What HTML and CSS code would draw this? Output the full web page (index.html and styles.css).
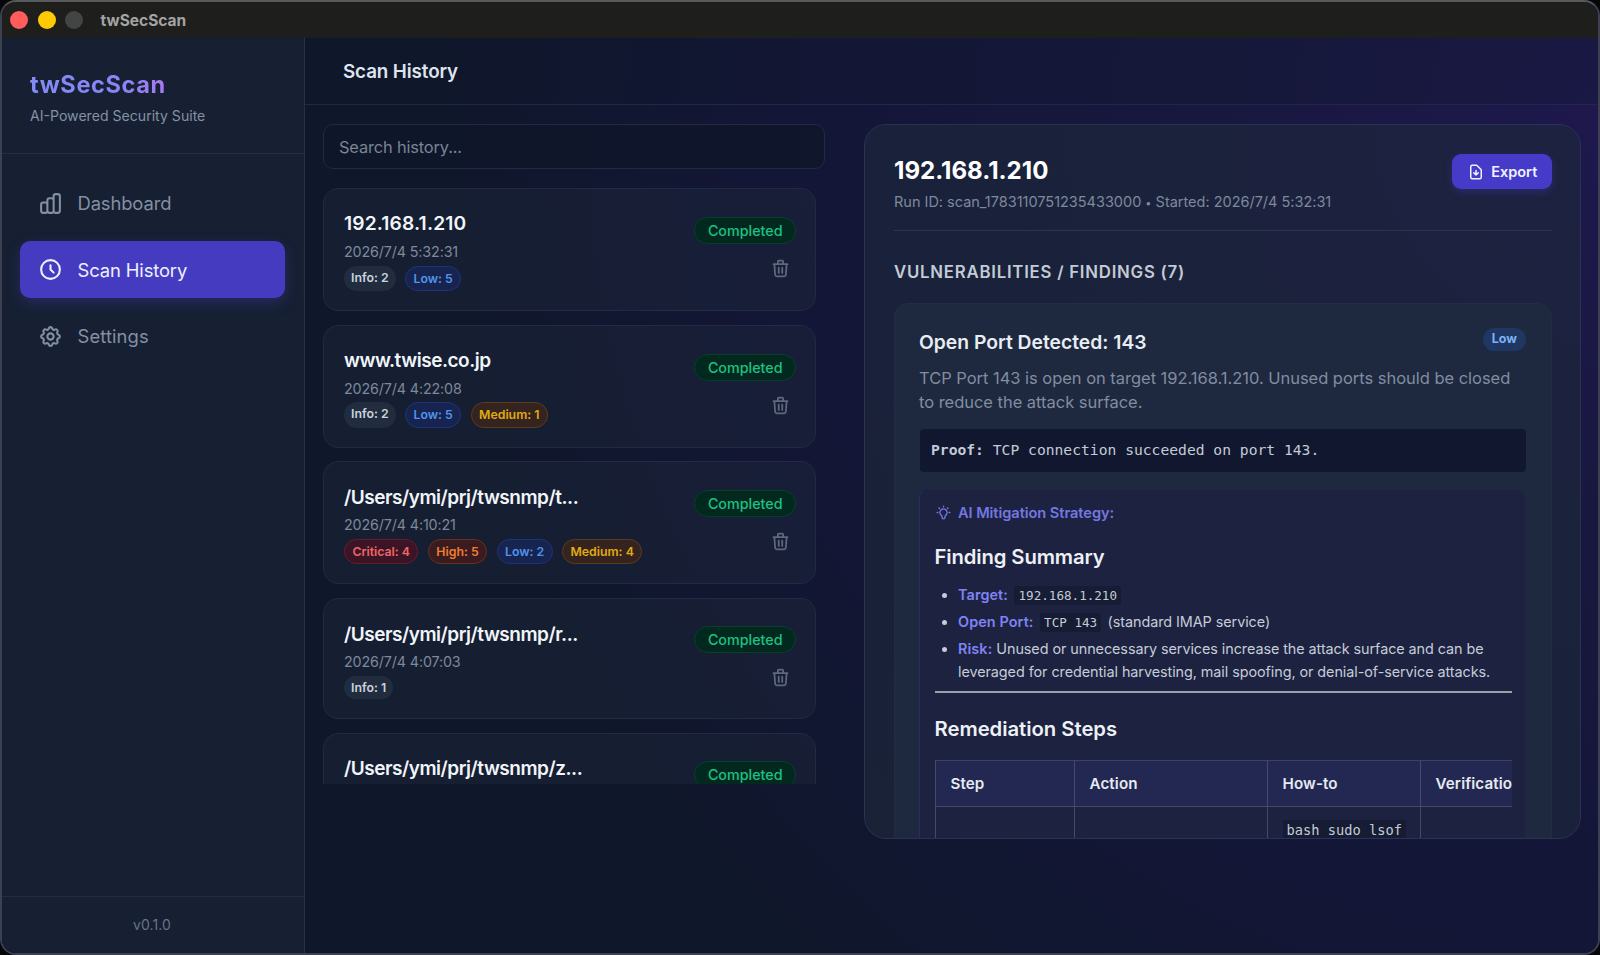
FILE: index.html
```html
<!DOCTYPE html>
<html lang="en">
<head>
<meta charset="utf-8">
<title>twSecScan</title>
<link rel="stylesheet" href="styles.css">
</head>
<body>
<svg class="defs" width="0" height="0">
  <symbol id="trash" viewBox="0 0 24 24"><path d="M19 7l-.867 12.142A2 2 0 0116.138 21H7.862a2 2 0 01-1.995-1.858L5 7m5 4v6m4-6v6m1-10V4a1 1 0 00-1-1h-4a1 1 0 00-1 1v3M4 7h16"/></symbol>
</svg>
<div class="window">
  <div class="titlebar">
    <span class="dot red"></span><span class="dot yellow"></span><span class="dot gray"></span>
    <span class="window-title">twSecScan</span>
  </div>
  <div class="app">
    <aside class="sidebar">
      <div class="brand">
        <div><span class="brand-name">twSecScan</span></div>
        <div class="brand-sub">AI-Powered Security Suite</div>
      </div>
      <nav class="nav">
        <a class="nav-item"><svg class="nav-icon" viewBox="0 0 24 24"><path d="M9 19v-6a2 2 0 00-2-2H5a2 2 0 00-2 2v6a2 2 0 002 2h2a2 2 0 002-2zm0 0V9a2 2 0 012-2h2a2 2 0 012 2v10m-6 0a2 2 0 002 2h2a2 2 0 002-2m0 0V5a2 2 0 012-2h2a2 2 0 012 2v14a2 2 0 01-2 2h-2a2 2 0 01-2-2z"/></svg><span>Dashboard</span></a>
        <a class="nav-item active"><svg class="nav-icon" viewBox="0 0 24 24"><path d="M12 8v4l3 3m6-3a9 9 0 11-18 0 9 9 0 0118 0z"/></svg><span>Scan History</span></a>
        <a class="nav-item"><svg class="nav-icon" viewBox="0 0 24 24"><path d="M10.325 4.317c.426-1.756 2.924-1.756 3.35 0a1.724 1.724 0 002.573 1.066c1.543-.94 3.31.826 2.37 2.37a1.724 1.724 0 001.065 2.572c1.756.426 1.756 2.924 0 3.35a1.724 1.724 0 00-1.066 2.573c.94 1.543-.826 3.31-2.37 2.37a1.724 1.724 0 00-2.572 1.065c-.426 1.756-2.924 1.756-3.35 0a1.724 1.724 0 00-2.573-1.066c-1.543.94-3.31-.826-2.37-2.37a1.724 1.724 0 00-1.065-2.572c-1.756-.426-1.756-2.924 0-3.35a1.724 1.724 0 001.066-2.573c-.94-1.543.826-3.31 2.37-2.37.996.608 2.296.07 2.572-1.065z"/><path d="M15 12a3 3 0 11-6 0 3 3 0 016 0z"/></svg><span class="settings">Settings</span></a>
      </nav>
      <div class="version">v0.1.0</div>
    </aside>
    <main class="main">
      <header class="header">Scan History</header>
      <div class="content">
        <section class="history">
          <div class="search">Search history...</div>
          <div class="cards">
            <article class="card">
              <div class="card-info">
                <div class="card-title ip">192.168.1.210</div>
                <div class="card-date">2026/7/4 5:32:31</div>
                <div class="tags"><span class="tag info">Info: 2</span><span class="tag low">Low: 5</span></div>
              </div>
              <div class="card-side"><span class="status">Completed</span><span class="delete"><svg><use href="#trash"/></svg></span></div>
            </article>
            <article class="card">
              <div class="card-info">
                <div class="card-title">www.twise.co.jp</div>
                <div class="card-date">2026/7/4 4:22:08</div>
                <div class="tags"><span class="tag info">Info: 2</span><span class="tag low">Low: 5</span><span class="tag medium">Medium: 1</span></div>
              </div>
              <div class="card-side"><span class="status">Completed</span><span class="delete"><svg><use href="#trash"/></svg></span></div>
            </article>
            <article class="card">
              <div class="card-info">
                <div class="card-title">/Users/ymi/prj/twsnmp/t...</div>
                <div class="card-date">2026/7/4 4:10:21</div>
                <div class="tags"><span class="tag critical">Critical: 4</span><span class="tag high">High: 5</span><span class="tag low">Low: 2</span><span class="tag medium">Medium: 4</span></div>
              </div>
              <div class="card-side"><span class="status">Completed</span><span class="delete"><svg><use href="#trash"/></svg></span></div>
            </article>
            <article class="card">
              <div class="card-info">
                <div class="card-title">/Users/ymi/prj/twsnmp/r...</div>
                <div class="card-date">2026/7/4 4:07:03</div>
                <div class="tags"><span class="tag info">Info: 1</span></div>
              </div>
              <div class="card-side"><span class="status">Completed</span><span class="delete"><svg><use href="#trash"/></svg></span></div>
            </article>
            <article class="card last">
              <div class="card-info">
                <div class="card-title">/Users/ymi/prj/twsnmp/z...</div>
              </div>
              <div class="card-side"><span class="status">Completed</span></div>
            </article>
          </div>
        </section>
        <section class="detail">
          <div class="detail-head">
            <div>
              <div class="detail-title">192.168.1.210</div>
              <div class="detail-meta">Run ID: scan_1783110751235433000 <span class="bullet">•</span> Started: 2026/7/4 5:32:31</div>
            </div>
            <button class="export"><svg viewBox="0 0 24 24"><path d="M12 10v6m0 0l-3-3m3 3l3-3m2 8H7a2 2 0 01-2-2V5a2 2 0 012-2h5.586a1 1 0 01.707.293l5.414 5.414a1 1 0 01.293.707V19a2 2 0 01-2 2z"/></svg><span>Export</span></button>
          </div>
          <h3 class="section-title">VULNERABILITIES / FINDINGS (7)</h3>
          <div class="finding">
            <div class="finding-head"><span class="finding-title">Open Port Detected: 143</span><span class="severity">Low</span></div>
            <p class="finding-text">TCP Port 143 is open on target 192.168.1.210. Unused ports should be closed<br>to reduce the attack surface.</p>
            <div class="proof"><b>Proof:</b> TCP connection succeeded on port 143.</div>
            <div class="ai">
              <div class="ai-label"><svg viewBox="0 0 24 24"><path d="M12 3v1m6.364 1.636l-.707.707M21 12h-1M4 12H3m3.343-5.657l-.707-.707m2.828 9.9a5 5 0 117.072 0l-.548.547A3.374 3.374 0 0014 18.469V19a2 2 0 11-4 0v-.531c0-.895-.356-1.754-.988-2.386l-.548-.547z"/></svg><span>AI Mitigation Strategy:</span></div>
              <h4 class="ai-title">Finding Summary</h4>
              <ul class="ai-list">
                <li><b>Target:</b> <code>192.168.1.210</code></li>
                <li><b>Open Port:</b> <code>TCP 143</code> (standard IMAP service)</li>
                <li><b>Risk:</b> Unused or unnecessary services increase the attack surface and can be<br>leveraged for credential harvesting, mail spoofing, or denial-of-service attacks.</li>
              </ul>
              <hr class="rule">
              <h4 class="ai-title steps">Remediation Steps</h4>
              <div class="table">
                <div class="cell head">Step</div><div class="cell head">Action</div><div class="cell head">How-to</div><div class="cell head">Verification</div>
                <div class="cell"></div><div class="cell"></div><div class="cell"><code>bash sudo lsof</code></div><div class="cell"></div>
              </div>
            </div>
          </div>
        </section>
      </div>
    </main>
  </div>
</div>
</body>
</html>
```
FILE: styles.css
```css
* { box-sizing: border-box; }
body { margin: 0; background: #060708; font-family: Inter, "Liberation Sans", sans-serif; height: 955px; overflow: hidden; }
svg { fill: none; stroke: currentColor; stroke-width: 2; stroke-linecap: round; stroke-linejoin: round; flex: none; }
.defs { position: absolute; }
.window { height: 955px; border: 2px solid #3c4050; border-top-color: #58595b; border-radius: 16px; overflow: hidden; display: flex; flex-direction: column; background: #0f172a; }
.titlebar { height: 36px; flex: none; background: #1e1e1d; display: flex; align-items: center; padding-left: 8px; gap: 9.5px; }
.dot { width: 18px; height: 18px; border-radius: 50%; }
.red { background: #ff5d5b; }
.yellow { background: #fecb02; }
.gray { background: #434544; }
.window-title { margin-left: 8px; font-size: 15.5px; font-weight: 700; color: #a3a3a3; }
.app { flex: 1; display: flex; min-height: 0; background: radial-gradient(circle at 1598px 80px, #1e184d 0, #18183e 400px, #141638 760px, #0f172a 1180px); }
.sidebar { width: 303px; flex: none; background: #162032; border-right: 1px solid #263145; display: flex; flex-direction: column; }
.brand { height: 116px; padding: 32px 28px 0; border-bottom: 1px solid #222d3f; }
.brand-name { font-size: 23.6px; line-height: 30px; font-weight: 700; letter-spacing: .6px; background: linear-gradient(90deg, #818cf8, #8b83f7 70%, #a67bf0); -webkit-background-clip: text; background-clip: text; color: transparent; }
.brand-sub { font-size: 14.1px; line-height: 20px; margin-top: 6px; color: #8491a5; }
.nav { flex: 1; padding: 20px 19px 20px 18px; display: flex; flex-direction: column; gap: 9px; }
.nav-item { height: 57.6px; border-radius: 10px; display: flex; align-items: center; padding: 1px 0 0 18px; gap: 14.5px; font-size: 18.4px; letter-spacing: -.12px; color: #8390a4; }
.settings { letter-spacing: .1px; }
.nav-icon { width: 25px; height: 25px; }
.active { background: #453bc1; color: #eef0ff; box-shadow: 0 5px 14px rgba(79, 70, 229, .26); }
.version { height: 57px; border-top: 1px solid #222d3f; text-align: center; font-size: 14px; letter-spacing: .1px; line-height: 56px; padding-right: 2px; color: #64748b; }
.main { flex: 1; min-width: 0; display: flex; flex-direction: column; }
.header { height: 67px; flex: none; border-bottom: 1px solid #20284a; padding-left: 38px; line-height: 68px; font-size: 18.8px; letter-spacing: -.1px; font-weight: 600; color: #dfe5ee; background: rgba(15, 23, 42, .25); }
.content { flex: 1; display: flex; padding: 19px 17px 0 18px; }
.history { width: 502px; flex: none; }
.search { height: 45px; border: 1px solid #222b42; border-radius: 10px; background: rgba(15, 23, 42, .75); padding-left: 15px; line-height: 44px; font-size: 16.4px; letter-spacing: -.15px; color: #7b8596; }
.cards { margin-top: 19px; height: 596px; overflow: hidden; display: flex; flex-direction: column; gap: 13.6px; padding-right: 9px; }
.card { flex: none; border: 1px solid #212a42; border-radius: 15px; background: rgba(30, 41, 59, .45); padding: 20px 19px 19px 20px; display: flex; justify-content: space-between; align-items: center; }
.card-title { font-size: 19px; line-height: 28px; padding-top: 1.5px; font-weight: 600; letter-spacing: -.47px; color: #f1f5f9; }
.ip { padding: 0 0 1.5px; font-size: 19.2px; letter-spacing: .15px; }
.card-date { font-size: 14.3px; letter-spacing: -.13px; line-height: 22px; margin: 2.5px 0; color: #7d899b; }
.tags { display: flex; gap: 9.5px; }
.tag { border-radius: 13px; font-size: 12.3px; line-height: 23.6px; font-weight: 600; padding: 0 7.4px; border: 1px solid; }
.info { border: 0; padding: 0 7px; background: #212c3e; color: #cbd3df; }
.low { color: #4f94ea; background: #182450; border-color: #1e347a; }
.medium { color: #e0ac10; background: #35231f; border-color: #5c3d16; }
.critical { color: #ef6668; background: #3b1526; border-color: #6a1a2a; }
.high { color: #f07d30; background: #3a1c20; border-color: #6b2f1a; }
.card-side { display: flex; flex-direction: column; align-items: flex-end; gap: 11px; }
.status { height: 27px; line-height: 25px; padding: 0 12.5px; border-radius: 14px; font-size: 14.3px; font-weight: 500; color: #1cc284; background: #03291f; border: 1px solid #06402d; }
.delete { padding: 3px 5px; height: 28px; color: #5d697c; }
.delete svg { width: 21px; height: 21px; display: block; }
.last { height: 123px; align-items: flex-start; }
.last .card-side { padding-top: 7px; }
.detail { margin-left: 39px; flex: 1; min-width: 0; height: 715px; border: 1px solid #2b3252; border-radius: 22px; overflow: hidden; background: rgba(29, 41, 60, .64); padding: 29px 28px 0 29px; }
.detail-head { display: flex; justify-content: space-between; align-items: flex-start; height: 77px; border-bottom: 1px solid #2c3550; }
.detail-title { font-size: 24.1px; line-height: 34px; font-weight: 700; color: #fff; }
.detail-meta { font-size: 14.5px; letter-spacing: -.01px; line-height: 20px; margin-top: 4px; color: #7d899d; }
.bullet { font-size: 11px; }
.export { height: 35px; width: 100px; padding: 0; border: 0; border-radius: 9px; background: #453bc8; color: #f2f2ff; font: 600 14.5px Inter, sans-serif; display: flex; align-items: center; justify-content: center; gap: 6.5px; box-shadow: 0 3px 8px rgba(79, 70, 229, .25); }
.export svg { width: 18px; height: 18px; }
.section-title { margin: 29px 0 18px; font-size: 16.8px; line-height: 25px; font-weight: 600; letter-spacing: .76px; color: #c3cbd7; }
.finding { border: 1px solid #222d43; border-radius: 14px; background: #1e283e; padding: 24px 25px 0 24px; height: 700px; }
.finding-head { display: flex; justify-content: space-between; }
.finding-title { font-size: 19.3px; line-height: 29px; font-weight: 600; color: #e8edf4; }
.severity { height: 23px; line-height: 22px; border-radius: 12px; padding: 0 9px; background: #213763; color: #7db2f5; font-size: 12.5px; font-weight: 700; }
.finding-text { margin: 9px 0 15px; font-size: 16.5px; letter-spacing: -.03px; line-height: 24px; color: #818da0; white-space: nowrap; }
.proof { margin-left: 1px; height: 43px; border-radius: 4px; background: #11172e; padding-left: 11px; line-height: 42px; font-family: "DejaVu Sans Mono", monospace; font-size: 14.67px; color: #c3cbd8; }
.ai { margin-top: 17px; height: 500px; border: 1px solid #1f2748; border-left: 1px solid #262f62; border-radius: 8px 8px 0 0; background: #1c2240; padding: 10px 13px 0 14.5px; }
.ai-label { display: flex; align-items: center; gap: 6.5px; height: 25px; font-size: 14.6px; font-weight: 600; letter-spacing: -.05px; color: #7577e0; }
.ai-label svg { width: 17px; height: 17px; }
.ai-title { margin: 18px 0 12px; font-size: 20.3px; letter-spacing: -.12px; line-height: 28px; font-weight: 600; color: #edf1f6; }
.ai-list { margin: 0; padding-left: 23.5px; font-size: 14.4px; letter-spacing: -.07px; line-height: 23px; color: #c5ccd8; }
.ai-list li { margin-bottom: 4px; white-space: nowrap; }
.ai-list b { color: #8083f4; font-weight: 600; letter-spacing: .1px; }
code { font-family: "DejaVu Sans Mono", monospace; font-size: 12.6px; letter-spacing: 0; line-height: 1; padding: 2px 4px; border-radius: 3px; background: #161c33; color: #c3cbd8; }
.ai-list code { margin: 0 2.5px; }
.rule { border: 0; height: 2px; background: #9a9fa8; margin: 7.5px 0 0; }
.steps { margin: 22px 0 17px; letter-spacing: -.03px; }
.table { display: grid; grid-template-columns: 139px 193px 153px 200px; overflow: hidden; border-left: 1px solid #444a68; border-top: 1px solid #3c4265; }
.cell { border-right: 1px solid #444a68; border-bottom: 1px solid #444a68; height: 46px; padding-left: 15px; line-height: 45px; font-size: 15.2px; letter-spacing: .1px; font-weight: 600; color: #e6eaf1; }
.head { background: #232853; }
.cell code { font-size: 13.7px; font-weight: 400; }
```
